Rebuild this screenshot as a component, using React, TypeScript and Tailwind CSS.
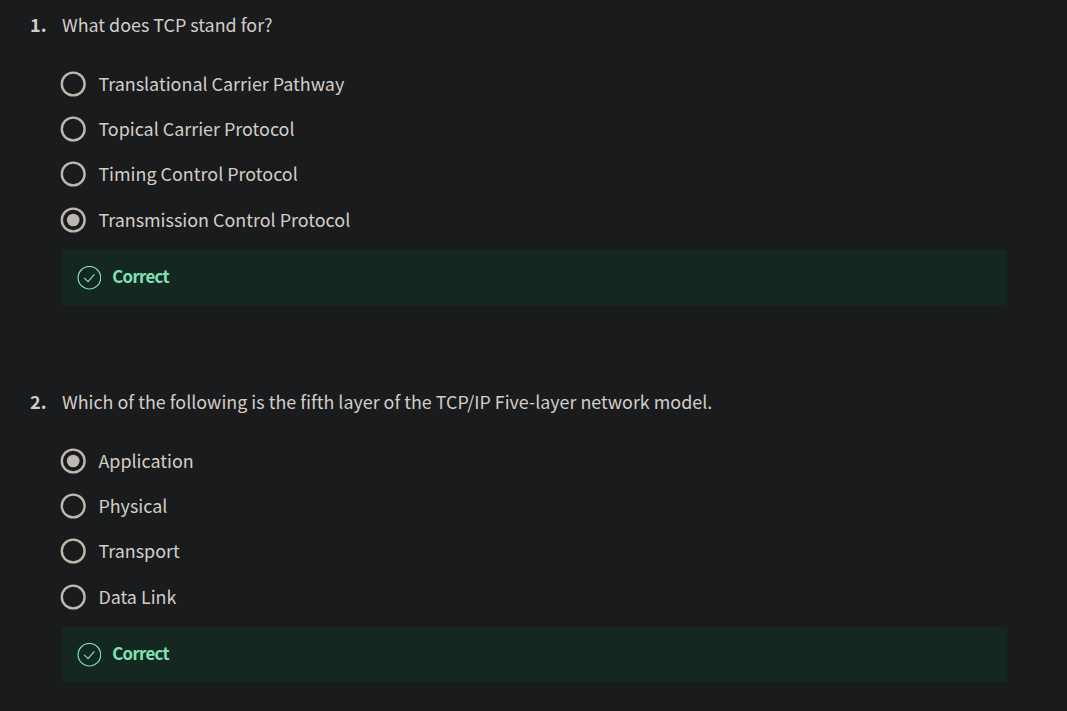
const questions = [
  {
    id: 1,
    text: 'What does TCP stand for?',
    options: ['Translational Carrier Pathway', 'Topical Carrier Protocol', 'Timing Control Protocol', 'Transmission Control Protocol'],
    selected: 3,
  },
  {
    id: 2,
    text: 'Which of the following is the fifth layer of the TCP/IP Five-layer network model.',
    options: ['Application', 'Physical', 'Transport', 'Data Link'],
    selected: 0,
  },
];

function Radio({ checked }: { checked: boolean }) {
  return (
    <svg className="size-[26px] shrink-0" viewBox="0 0 26 26" fill="none">
      <circle cx="13.2" cy="13" r="11.4" stroke="#beb8af" strokeWidth="2.4" />
      {checked && <circle cx="13.2" cy="13" r="6.3" fill="#beb8af" />}
    </svg>
  );
}

function Correct() {
  return (
    <div className="flex h-[55px] items-center bg-[#152721] pl-[15px] text-[#7fe3b5]">
      <svg className="size-6 shrink-0" viewBox="0 0 24 24" fill="none" stroke="currentColor">
        <circle cx="12.4" cy="11.7" r="11.3" strokeWidth="1.2" />
        <path d="M7.2 11.9 L11 15.7 L17.4 8.3" strokeWidth="1.2" />
      </svg>
      <span className="ml-[11.3px] pb-[3px] text-[16.8px] leading-6 font-bold tracking-[-0.7px]">Correct</span>
    </div>
  );
}

export default function App() {
  return (
    <main className="h-[711px] w-full overflow-hidden bg-[#1a1b1d] pt-[9px] font-['Noto_Sans_CJK_SC',sans-serif] text-lg text-[#d2cec7]">
      {questions.map((q) => (
        <section key={q.id} className="flex h-[377px] pr-[60px] pl-[30px]">
          <span className="w-8 shrink-0 leading-[30px] font-bold">{q.id}.</span>
          <div className="flex-1">
            <h2 className="text-[17.9px] leading-[30px]">{q.text}</h2>
            <div className="mt-[22px] -ml-0.5 h-[181px]" role="radiogroup">
              {q.options.map((option, i) => (
                <div key={option} className="flex h-[45.3px] items-center" role="radio" aria-checked={i === q.selected}>
                  <Radio checked={i === q.selected} />
                  <span className="ml-[12.4px] pb-[2px] text-[17.92px] leading-7">{option}</span>
                </div>
              ))}
            </div>
            <div className="mt-2">
              <Correct />
            </div>
          </div>
        </section>
      ))}
    </main>
  );
}
